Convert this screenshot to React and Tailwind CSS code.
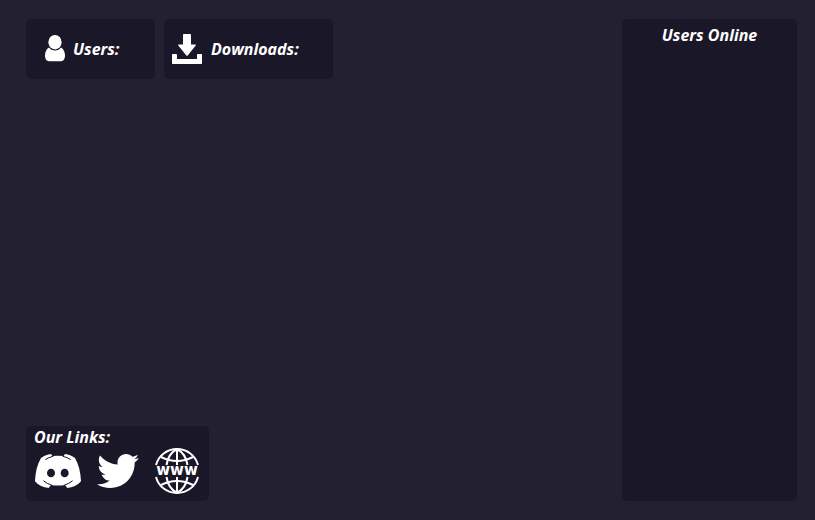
import React from "react";

const heading = "text-base leading-5 font-bold italic text-white";

function UserIcon() {
  return (
    <svg viewBox="0 0 20 28" className="h-7 w-5 shrink-0" fill="#fff" aria-hidden="true">
      <ellipse cx="10" cy="7.2" rx="6.6" ry="7.2" />
      <path d="M4 12.6C1.5 14 0 17 0 20.5 0 24 1.5 26.2 4 26.2H16C18.5 26.2 20 24 20 20.5 20 17 18.5 14 16 12.6 14.5 14.6 12.5 15.5 10 15.5S5.500 14.6 4 12.6Z" />
    </svg>
  );
}

function DownloadIcon() {
  return (
    <svg viewBox="0 0 30 30" className="size-[30px] shrink-0" fill="#fff" aria-hidden="true">
      <path d="M11 .8Q11 0 11.800 0H18.200Q19 0 19 .8V10.500H23.200Q24.500 10.500 23.700 11.600L15.700 21.400Q15 22.200 14.300 21.400L6.300 11.600Q5.500 10.500 6.800 10.500H11Z" />
      <path d="M0 20.700Q0 20 .7 20H4.300Q5 20 5 20.700V25H25V20.700Q25 20 25.700 20H29.300Q30 20 30 20.700V29.200Q30 30 29.200 30H.8Q0 30 0 29.200Z" />
    </svg>
  );
}

function DiscordIcon() {
  return (
    <svg viewBox="0 0 138 102" className="h-[34px] w-[46px]" aria-hidden="true">
      <path
        fill="#fff"
        d="M18 12C27 5 38 1 48 0L52 6Q69 4 86 6L90 0C100 1 111 5 120 12C131 31 137 54 138 82C128 94 113 101 97 102L90 93Q69 96 48 93L41 102C25 101 10 94 0 82C1 54 7 31 18 12Z"
      />
      <path
        fill="none"
        stroke="#1a1728"
        strokeWidth="3"
        strokeLinecap="round"
        d="M32 16Q41 10 54 7M106 16Q97 10 84 7M26 81Q36 89 49 93M112 81Q102 89 89 93"
      />
      <ellipse cx="48" cy="57" rx="12" ry="13" fill="#1a1728" />
      <ellipse cx="89" cy="57" rx="12" ry="13" fill="#1a1728" />
    </svg>
  );
}

function TwitterIcon() {
  return (
    <svg viewBox="0 48 512 416" className="h-[34px] w-[42px]" fill="#fff" aria-hidden="true">
      <path d="M459.37 151.716c.325 4.548.325 9.097.325 13.645 0 138.72-105.583 298.558-298.558 298.558-59.452 0-114.680-17.219-161.137-47.106 8.447.974 16.568 1.299 25.340 1.299 49.055 0 94.213-16.568 130.274-44.832-46.132-.975-84.792-31.188-98.112-72.772 6.498.974 12.995 1.624 19.818 1.624 9.421 0 18.843-1.300 27.614-3.573-48.081-9.747-84.143-51.980-84.143-102.985v-1.299c13.969 7.797 30.214 12.670 47.431 13.319-28.264-18.843-46.781-51.005-46.781-87.391 0-19.492 5.197-37.360 14.294-52.954 51.655 63.675 129.300 105.258 216.365 109.807-1.624-7.797-2.599-15.918-2.599-24.040 0-57.828 46.782-104.934 104.934-104.934 30.213 0 57.502 12.670 76.670 33.137 23.715-4.548 46.456-13.320 66.599-25.340-7.798 24.366-24.366 44.833-46.132 57.827 21.117-2.273 41.584-8.122 60.426-16.243-14.292 20.791-32.161 39.308-52.628 54.253z" />
    </svg>
  );
}

function WebIcon() {
  return (
    <svg viewBox="0 0 44 46" className="h-[46px] w-11 overflow-visible" aria-hidden="true">
      <g fill="none" stroke="#fff" strokeWidth="2">
        <path d="M1 17C3.500 7.500 12 1 22 1S40.500 7.500 43 17M1 29C3.500 38.500 12 45 22 45S40.500 38.500 43 29" />
        <path d="M22 1V17M22 29V45" />
        <path d="M22 1C16.500 4 12.500 10 11.500 17M22 1C27.500 4 31.500 10 32.500 17M22 45C16.500 42 12.500 36 11.500 29M22 45C27.500 42 31.500 36 32.500 29" />
        <path d="M6 9Q22 17 38 9M6 37Q22 29 38 37" />
      </g>
      <text x="22" y="27" textAnchor="middle" className="fill-white font-['DejaVu_Sans',sans-serif] text-[15px] font-bold">
        www
      </text>
    </svg>
  );
}

export default function App() {
  return (
    <div className="flex min-h-screen bg-[#232031] pt-[19px] pr-[18px] pb-[19px] pl-[26px] font-['Open_Sans','Noto_Sans',sans-serif]">
      <main className="flex flex-1 flex-col items-start justify-between">
        <div className="flex gap-[9px]">
          <section className="flex h-[60px] w-[129px] items-center gap-2 rounded-[5px] bg-[#1a1728] pl-[19px]">
            <UserIcon />
            <h2 className={heading}>Users:</h2>
          </section>
          <section className="flex h-[60px] w-[169px] items-center gap-[9px] rounded-[5px] bg-[#1a1728] pl-2">
            <DownloadIcon />
            <h2 className={heading}>Downloads:</h2>
          </section>
        </div>
        <section className="h-[75px] w-[183px] rounded-[5px] bg-[#1a1728] px-2 pt-px">
          <h2 className={heading}>Our Links:</h2>
          <nav className="flex items-center gap-4 pt-px pl-px">
            <a href="#discord" aria-label="Discord"><DiscordIcon /></a>
            <a href="#twitter" aria-label="Twitter"><TwitterIcon /></a>
            <a href="#website" aria-label="Website"><WebIcon /></a>
          </nav>
        </section>
      </main>
      <aside className="w-[175px] shrink-0 rounded-[5px] bg-[#1a1728] pt-[6px] text-center">
        <h2 className={heading}>Users Online</h2>
      </aside>
    </div>
  );
}
